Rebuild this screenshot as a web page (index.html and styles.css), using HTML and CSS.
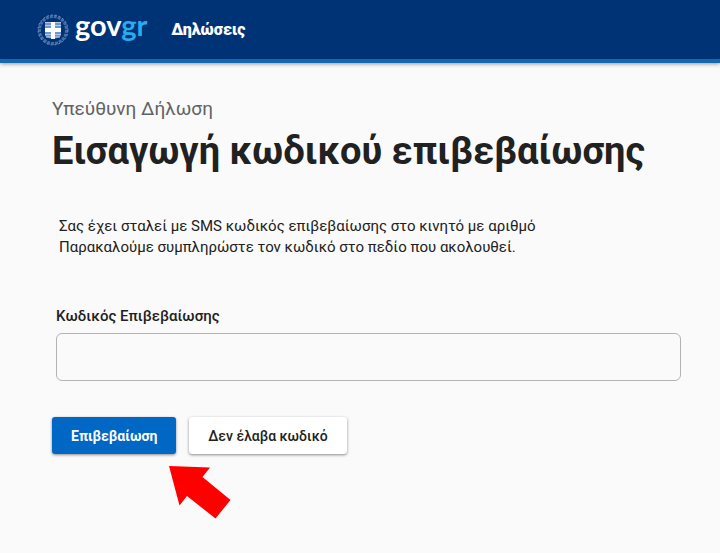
FILE: index.html
```
<!DOCTYPE html>
<html lang="el">
    <head>
        <meta charset="UTF-8">
        <meta name="viewport" content="width=device-width, initial-scale=1.0">
        <title>Υπεύθυνη Δήλωση</title>
        <link rel="stylesheet" href="styles.css">
    </head>
    <body>
        <header class="header">
            <a class="logo" href="#">
                <svg class="emblem" viewBox="0 0 32 32" aria-hidden="true">
                    <!-- laurel wreath -->
                    <circle cx="16" cy="16" r="13.500" fill="none" stroke="#7f9fcd" stroke-width="3" stroke-dasharray="3 1" opacity="0.55"/>
                    <circle cx="16" cy="16" r="15" fill="none" stroke="#8eabd4" stroke-width="1" stroke-dasharray="2 2" opacity="0.7"/>
                    <!-- shield with cross -->
                    <path d="M8 8h16v13c0 2-3 3-8 4-5-1-8-2-8-4z" fill="#7296cb"/>
                    <path d="M8 8.500h16M8 11.500h16M8 20.500h16M9 23h14" stroke="#b4c8e6" stroke-width="1"/>
                    <path d="M14 8h4v6h6v4h-6v7h-4v-7H8v-4h6z" fill="#fff"/>
                </svg>
                <span class="logo-text">gov<span class="logo-gr">gr</span></span>
            </a>
            <a class="service" href="#">Δηλώσεις</a>
        </header>
        <main class="content">
            <p class="caption">Υπεύθυνη Δήλωση</p>
            <h1 class="title">Εισαγωγή κωδικού επιβεβαίωσης</h1>
            <p class="message">
                Σας έχει σταλεί με SMS κωδικός επιβεβαίωσης στο κινητό με αριθμό<br>
                Παρακαλούμε συμπληρώστε τον κωδικό στο πεδίο που ακολουθεί.
            </p>
            <form class="form" action="" method="POST">
                <div class="field">
                    <label class="label" for="code">Κωδικός Επιβεβαίωσης</label>
                    <input class="code-input" type="text" id="code" name="code">
                </div>
                <div class="buttons">
                    <button class="button button-primary" type="submit">Επιβεβαίωση</button>
                    <button class="button button-secondary" type="button">Δεν έλαβα κωδικό</button>
                </div>
            </form>
            <svg class="arrow" viewBox="0 0 62 53" aria-hidden="true">
                <path d="M0 0L41 1.500 33.500 11 61.500 34 46.500 52.500 18 30 10.500 39.500z" fill="#ff0000"/>
            </svg>
        </main>
    </body>
</html>
```
FILE: styles.css
```
* {
    box-sizing: border-box;
}

body {
    margin: 0;
    background-color: #fafafa;
    color: #212121;
    font-family: Roboto, "Liberation Sans", sans-serif;
}

.header {
    display: flex;
    align-items: center;
    gap: 24px;
    height: 63px;
    padding: 0 37px;
    background-color: #003375;
    border-bottom: 4px solid #1468ae;
    box-shadow: 0 1px 4px rgba(0, 0, 0, 0.4);
}

.logo {
    display: flex;
    align-items: center;
    gap: 6px;
    color: #fff;
    text-decoration: none;
}

.emblem {
    width: 32px;
    height: 32px;
}

.logo-text {
    padding-bottom: 10px;
    font-family: Lato, sans-serif;
    font-size: 29px;
    font-weight: 700;
    line-height: 32px;
}

.logo-gr {
    color: #29abee;
}

.service {
    color: #fff;
    font-size: 16px;
    font-weight: 900;
    text-decoration: none;
}

.content {
    padding: 34px 39px 32px 52px;
}

.caption {
    margin: 0;
    color: #606365;
    font-size: 19px;
    line-height: 24px;
}

.title {
    margin: 5px 0 0;
    font-size: 38px;
    font-weight: 700;
    line-height: 50px;
}

.message {
    margin: 40px 0 0;
    padding-left: 7px;
    font-size: 15px;
    line-height: 21px;
}

.field {
    margin-top: 48px;
    padding-left: 4px;
}

.label {
    display: block;
    font-size: 15px;
    font-weight: 500;
    line-height: 20px;
}

.code-input {
    display: block;
    width: 100%;
    height: 48px;
    margin-top: 7px;
    padding: 0 12px;
    background-color: #fafafa;
    border: 1px solid #b1b4b6;
    border-radius: 6px;
    font: inherit;
}

.buttons {
    display: flex;
    gap: 13px;
    margin-top: 36px;
}

.button {
    height: 37px;
    padding: 0 19px;
    border: 0;
    border-radius: 3px;
    box-shadow: 0 1px 3px rgba(0, 0, 0, 0.45);
    font-family: inherit;
    font-size: 14px;
    cursor: pointer;
}

.button-primary {
    background-color: #0067c5;
    color: #fff;
    font-weight: 700;
}

.button-secondary {
    background-color: #fff;
    color: #212121;
    font-weight: 500;
}

.arrow {
    display: block;
    width: 62px;
    height: 53px;
    margin: 12px 0 0 117px;
}
```
